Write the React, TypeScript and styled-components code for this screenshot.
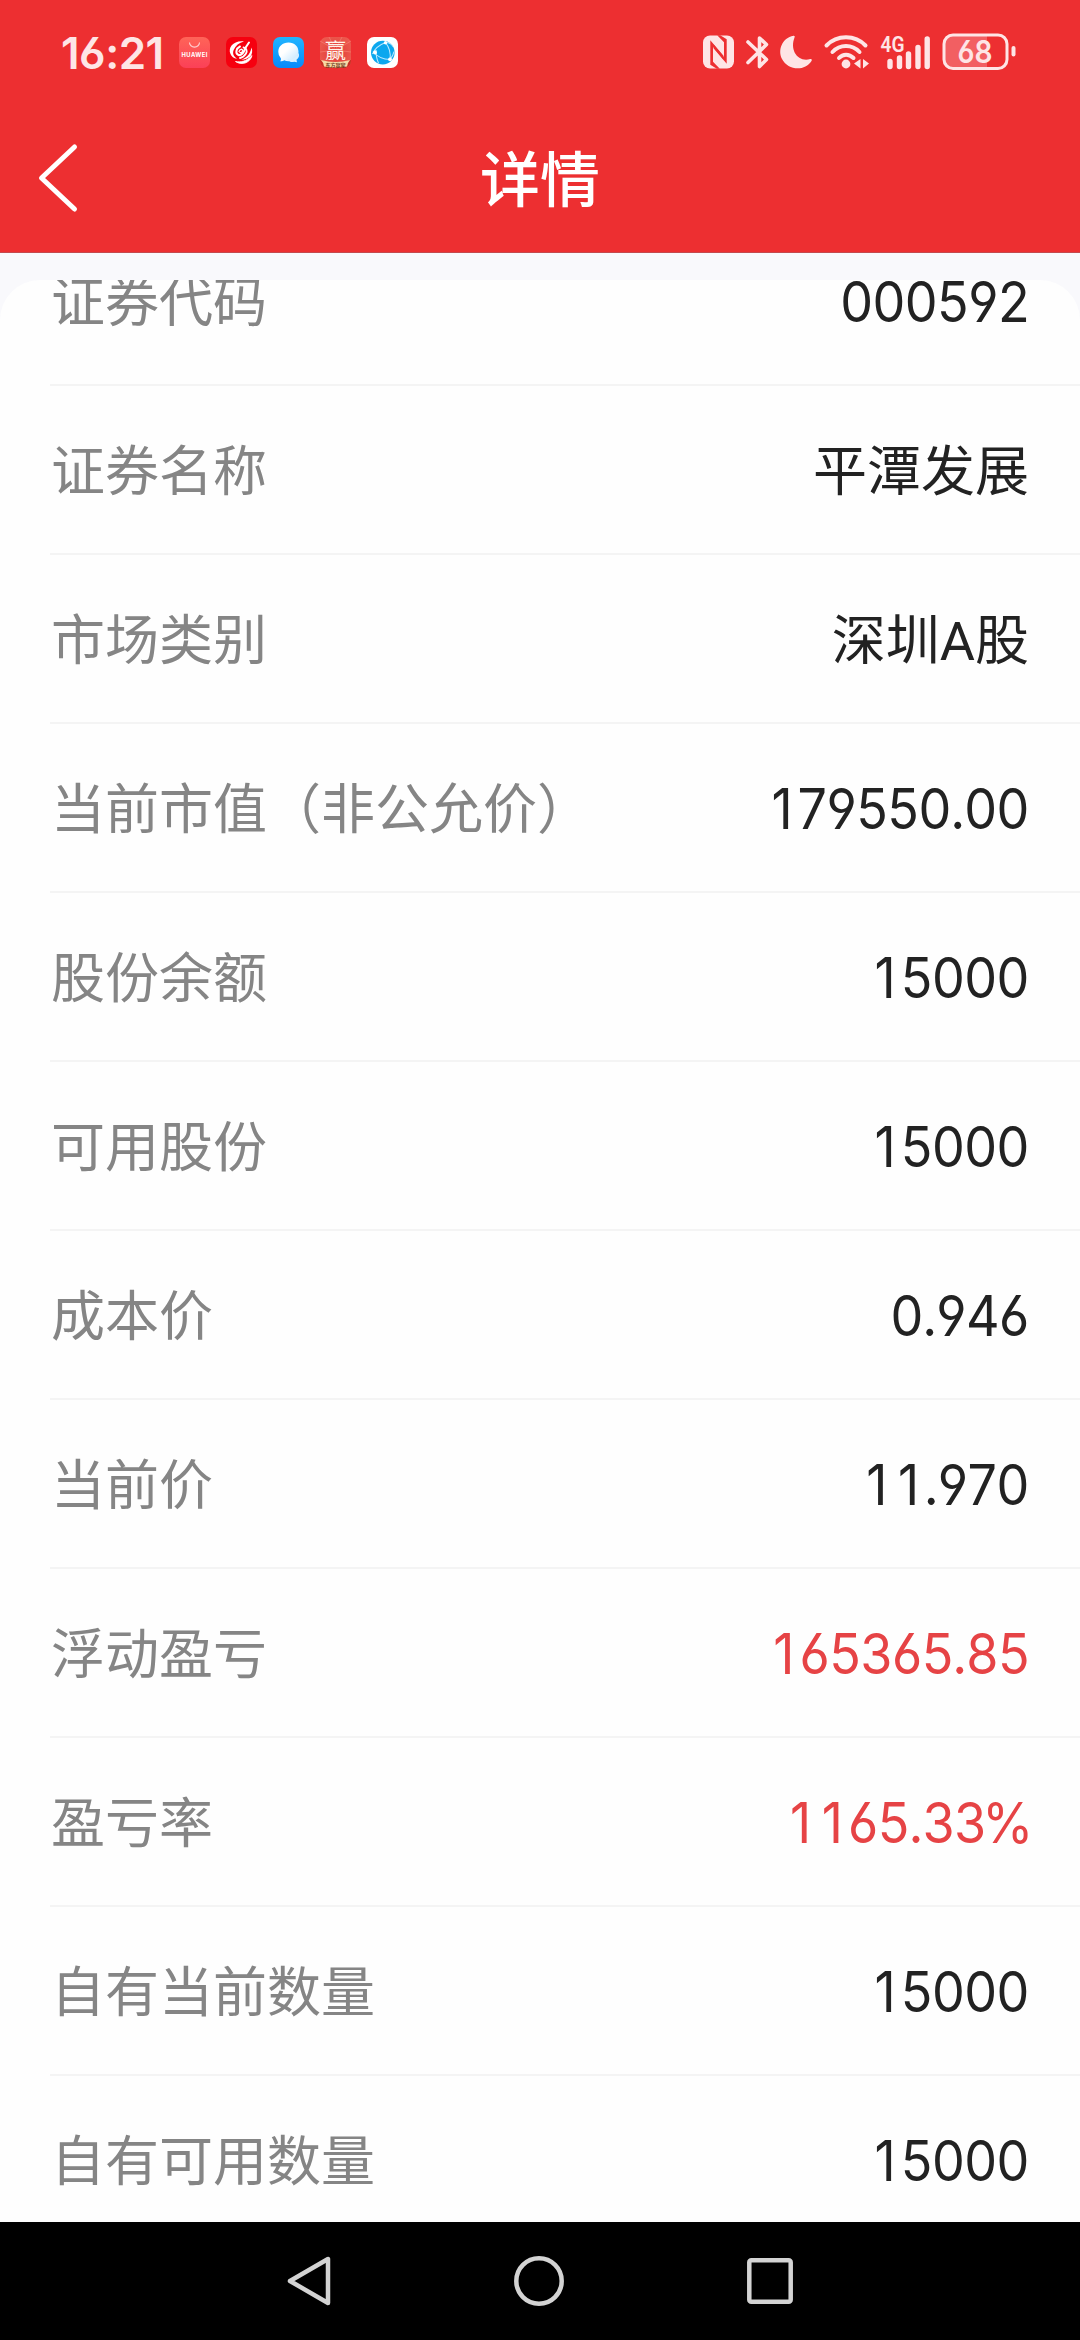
import React from "react";
import styled, { createGlobalStyle } from "styled-components";

const GlobalStyle = createGlobalStyle`
  * { box-sizing: border-box; }
  html, body { margin: 0; padding: 0; background: #000; }
  body { font-family: "Roboto", "Noto Sans CJK SC", sans-serif; }
`;

const Screen = styled.div`
  width: 1080px;
  height: 2340px;
  display: flex;
  flex-direction: column;
  overflow: hidden;
  background: #f9f9fc;
`;

const Header = styled.header`
  flex: none;
  height: 253px;
  background: #ed2f31;
  border-bottom: 1px solid #c34a4e;
`;

const StatusBar = styled.div`
  height: 104px;
  padding: 0 65px 0 61px;
  display: flex;
  align-items: center;
  justify-content: space-between;
  color: #fee5e6;
`;

const StatusSide = styled.div<{ $gap: number }>`
  display: flex;
  align-items: center;
  gap: ${(p) => p.$gap}px;
`;

const Clock = styled.span`
  width: 102px;
  padding-top: 2px;
  font-family: "Inter", sans-serif;
  font-size: 44px;
  line-height: 50px;
  font-weight: 570;
  font-feature-settings: "cv03", "cv04";
  letter-spacing: -0.5px;
  white-space: nowrap;
`;

const Icon = styled.svg`
  display: block;
  flex: none;
  overflow: visible;
`;

const TitleBar = styled.div`
  height: 148px;
  padding: 0 38px;
  display: grid;
  grid-template-columns: 1fr auto 1fr;
  align-items: center;
`;

const BackButton = styled.button`
  justify-self: start;
  padding: 0;
  border: 0;
  background: none;
`;

const Title = styled.h1`
  margin: 0;
  padding-bottom: 4px;
  color: #fff;
  font-family: "Noto Sans CJK SC", sans-serif;
  font-size: 60px;
  line-height: 80px;
  font-weight: 500;
`;

const Content = styled.main`
  flex: 1;
  min-height: 0;
  padding-top: 27px;
  display: flex;
`;

const Card = styled.section`
  flex: 1;
  overflow: hidden;
  background: #fefefe;
  border-radius: 40px 40px 0 0;
`;

const Rows = styled.dl`
  margin: -63px 0 0;
`;

const Row = styled.div`
  height: 169px;
  margin-left: 50px;
  padding: 0 51px 0 1px;
  display: flex;
  align-items: center;
  justify-content: space-between;
  border-bottom: 2px solid #f4f4f4;
`;

const Label = styled.dt`
  padding-bottom: 3px;
  color: #858585;
  font-family: "Noto Sans CJK SC", sans-serif;
  font-size: 54px;
  line-height: 80px;
  white-space: nowrap;
`;

const Value = styled.dd<{ $gain?: boolean }>`
  margin: 0;
  padding-top: 6px;
  color: ${(p) => (p.$gain ? "#e64345" : "#222")};
  font-family: "Roboto", "Noto Sans CJK SC", sans-serif;
  font-size: 54px;
  line-height: 80px;
  white-space: nowrap;
`;

const NumericValue = styled(Value)`
  padding: 2px 0 0;
  font-family: "Inter", sans-serif;
  font-size: 56px;
  font-weight: 420;
  font-kerning: none;
  font-feature-settings: "cv03", "cv04";
  letter-spacing: -0.6px;
  transform: scaleX(0.93);
  transform-origin: right center;
`;

const Spaced = styled.span<{ $before: number; $after: number }>`
  margin: 0 ${(p) => p.$after}px 0 ${(p) => p.$before}px;
`;

const NavBar = styled.nav`
  flex: none;
  height: 118px;
  padding: 0 287px;
  display: flex;
  align-items: center;
  justify-content: space-between;
  background: #000;
`;

type Item = { label: string; value: string; gain?: boolean };

const items: Item[] = [
  { label: "证券代码", value: "000592" },
  { label: "证券名称", value: "平潭发展" },
  { label: "市场类别", value: "深圳A股" },
  { label: "当前市值（非公允价）", value: "179550.00" },
  { label: "股份余额", value: "15000" },
  { label: "可用股份", value: "15000" },
  { label: "成本价", value: "0.946" },
  { label: "当前价", value: "11.970" },
  { label: "浮动盈亏", value: "165365.85", gain: true },
  { label: "盈亏率", value: "1165.33%", gain: true },
  { label: "自有当前数量", value: "15000" },
  { label: "自有可用数量", value: "15000" },
];

const spacing: Record<string, [number, number]> = {
  "1": [6, 6],
  ".": [-0.5, -0.5],
  "%": [-3.5, -4],
};

const renderPart = (part: string, i: number) => {
  const sides = spacing[part];
  return sides ? (
    <Spaced key={i} $before={sides[0]} $after={sides[1]}>{part}</Spaced>
  ) : (
    part
  );
};

const ItemValue = ({ value, gain }: { value: string; gain?: boolean }) =>
  /^[\d.%]+$/.test(value) ? (
    <NumericValue $gain={gain}>{value.split(/([1.%])/).map(renderPart)}</NumericValue>
  ) : (
    <Value $gain={gain}>{value}</Value>
  );

const AppIcons = () => (
  <StatusSide $gap={16}>
    <Icon width="31" height="31" viewBox="0 0 31 31">
      <defs>
        <linearGradient id="store" x1="0" y1="0" x2="0" y2="1">
          <stop offset="0" stopColor="#ff6458" />
          <stop offset="1" stopColor="#fb4057" />
        </linearGradient>
      </defs>
      <rect width="31" height="31" rx="7" fill="url(#store)" />
      <path d="M10.500 5.500a5 4.600 0 0 0 10 0" fill="none" stroke="#ffd0d0" strokeWidth="1.100" />
      <text x="15.500" y="20" textAnchor="middle" textLength="26" fontFamily="Inter, sans-serif" fontSize="5.800" fontWeight="700" fill="#fff">HUAWEI</text>
    </Icon>
    <Icon width="31" height="31" viewBox="0 0 31 31">
      <rect width="31" height="31" rx="7" fill="#f6000f" />
      <g fill="#fff">
        <path d="M18 4.500C8 3 1.500 10.500 4.500 17c1 2.600 3.300 4.300 6.500 4.800-3.500-2.500-4.800-5.500-3.200-9C9.500 8.500 13 6 18 4.500Z" />
        <path d="M25.500 10.500c2.500 7-2 12-10.500 12.300 4.500-1.500 9-4.500 10.500-12.300Z" />
        <path d="M9.500 24.500c5 1 11 0 16.500-6-1.500 7-10 10.500-16.500 6Z" stroke="#fff" strokeWidth="0.800" />
      </g>
      <g fill="none" stroke="#fff" strokeLinecap="round">
        <path d="M14 9.500c-4 2-5 7-1.500 8.500 4 1 5.500-3.500 7.500-8L23 5.500" strokeWidth="2" />
        <path d="M17.500 10.500c3 .5 4 3.500 2.500 6s-3.500 4-6 4.500" strokeWidth="1.800" />
        <path d="M13 14.500c1-2.500 3.500-3 3.500-1s-1.500 2.500-2.500 2" strokeWidth="1.300" />
      </g>
    </Icon>
    <Icon width="31" height="31" viewBox="0 0 31 31">
      <defs>
        <linearGradient id="chat" x1="0" y1="0" x2="0" y2="1">
          <stop offset="0" stopColor="#21b5ff" />
          <stop offset="1" stopColor="#0689fb" />
        </linearGradient>
        <linearGradient id="bubble" x1="0" y1="0" x2="1" y2="1">
          <stop offset="0.400" stopColor="#fff" />
          <stop offset="1" stopColor="#bde4ff" />
        </linearGradient>
      </defs>
      <rect width="31" height="31" rx="7" fill="url(#chat)" />
      <path d="M15.500 5.500c6 0 10 4 10 9.300s-4 9.400-10 9.400c-1.600 0-3-.3-4.300-.9-1 .8-2.600 1.200-4 1 .8-1 .9-2 .6-3A9 9 0 0 1 5.300 14.800c0-5.300 4.200-9.300 10.200-9.300Z" fill="url(#bubble)" />
      <path d="M14.500 22c1 2.500 4 3.700 6.600 2.800l2.900.5-.5-2.500a6 6 0 0 0 2-7c-1 4-5 7-11 6.200Z" fill="#d7efff" />
    </Icon>
    <Icon width="31" height="31" viewBox="0 0 31 31">
      <defs>
        <radialGradient id="win" cx="0.500" cy="0.500" r="0.700">
          <stop offset="0" stopColor="#df3a32" />
          <stop offset="1" stopColor="#ef6055" />
        </radialGradient>
      </defs>
      <rect width="31" height="31" rx="7" fill="url(#win)" />
      <path d="M15.500 13 0 4M15.500 13 9 0M15.500 13 22 0M15.500 13 31 4M15.500 13 0 15M15.500 13 31 15" stroke="#f4796c" strokeWidth="0.800" />
      <text x="15.500" y="21" textAnchor="middle" fontFamily="Noto Sans CJK SC, sans-serif" fontSize="21" fill="#fff4e9">赢</text>
      <path d="M0 23q15.500 4 31 0v1a7 7 0 0 1-7 7H7a7 7 0 0 1-7-7Z" fill="#c83024" />
      <path d="M1 23q14.500 4 29 0l-2 3-1 3.500q-11.500 1.800-23 0L3.200 26Z" fill="#f7d9a6" />
      <text x="15.500" y="29.700" textAnchor="middle" textLength="20" fontFamily="Noto Sans CJK SC, sans-serif" fontSize="5" fontWeight="700" fill="#70401e">东方赢家</text>
    </Icon>
    <Icon width="31" height="31" viewBox="0 0 31 31">
      <rect width="31" height="31" rx="7" fill="#fff" />
      <circle cx="15.800" cy="15.600" r="11.800" fill="#0ca7ee" />
      <g fill="none" stroke="#bce9ff" strokeWidth="1.100">
        <path d="M18.500 5.500C12 8 7.500 12 5.500 17M18.500 5.500c4 5 5.500 10 4.500 17M6 14.500c4.500 5.500 10 8 17 8M18.500 5.500c3.500-.2 6 1.500 7.500 4M23 22.500c2-2.500 3.500-5 4-8M9 13c0 5 .5 9 2.500 13" />
      </g>
      <g fill="#fff">
        <circle cx="18.500" cy="5.800" r="1.700" />
        <circle cx="8" cy="15.500" r="1.900" />
        <circle cx="23" cy="22.300" r="1.900" />
      </g>
    </Icon>
  </StatusSide>
);

const SystemIcons = () => (
  <Icon width="312" height="38" viewBox="0 0 312 38" fill="none" stroke="currentColor">
    <rect x="0" y="2.500" width="31" height="33" rx="7" stroke="none" fill="currentColor" />
    <g transform="translate(0 2.300)" stroke="none" fill="#ed2f31">
      <path d="M7.300 5v24.500l6.500 4h3L10 26.500V11.500l10.500 13V20.500Z" />
      <path d="M23.700 28.500V4L17.200 0h-3L21 7v15L10.500 9v4Z" />
    </g>
    <path d="m45 9 18.500 17.500-7 7V5l7 6.500L45 29.500" strokeWidth="3.600" strokeLinejoin="round" strokeLinecap="round" />
    <path d="M90.500 2.700C79 5 74.500 17 79 26c5.500 11 22.500 13 29.500 2 .8-1.500 0-2.300-1.300-1.900C95 29.500 86.500 17.500 91.500 4.500c.5-1.200.2-2-1-1.800Z" stroke="none" fill="currentColor" />
    <g strokeWidth="4" strokeLinecap="round">
      <path d="M123.500 12.500c10.500-11 28.500-11 39 0" />
      <path d="M129.500 19c7.500-8 19.500-8 27 0" />
      <path d="M136 25c4-4.500 10-4.500 14.500 0" />
    </g>
    <circle cx="143" cy="31" r="4.400" stroke="none" fill="currentColor" />
    <path d="M157.500 26v9.500l-6.500-5ZM160 26v9.500l6-5Z" stroke="none" fill="currentColor" />
    <text x="177.500" y="18.500" textLength="24" lengthAdjust="spacingAndGlyphs" fontFamily="Roboto, sans-serif" fontSize="22" fontWeight="600" stroke="none" fill="currentColor">4G</text>
    <path d="M187 28.500v5M196.500 25v8.500M205.500 21v12.500M215 14.500v19M224.200 6v27.500" strokeWidth="5.400" strokeLinecap="round" />
    <path d="M247 3h37v31h-37a6 6 0 0 1-6-6V9a6 6 0 0 1 6-6Z" fill="#f25f62" stroke="none" />
    <rect x="241" y="2" width="63" height="33.500" rx="9" strokeWidth="3" />
    <text x="272" y="30" textAnchor="middle" textLength="35" lengthAdjust="spacingAndGlyphs" fontFamily="Inter, sans-serif" fontSize="31.500" fontWeight="600" stroke="none" fill="currentColor" style={{ fontFeatureSettings: '"cv03"' }}>68</text>
    <path d="M310.500 15v6.500" strokeWidth="4" strokeLinecap="round" />
  </Icon>
);

export default function App() {
  return (
    <>
      <GlobalStyle />
      <Screen>
        <Header>
          <StatusBar>
            <StatusSide $gap={16}>
              <Clock>16:21</Clock>
              <AppIcons />
            </StatusSide>
            <SystemIcons />
          </StatusBar>
          <TitleBar>
            <BackButton aria-label="返回">
              <Icon width="40" height="68" viewBox="0 0 40 68">
                <path d="M36.500 3 3.500 34l33 31" fill="none" stroke="#fff" strokeWidth="5" strokeLinecap="round" strokeLinejoin="round" />
              </Icon>
            </BackButton>
            <Title>详情</Title>
          </TitleBar>
        </Header>
        <Content>
          <Card>
            <Rows>
              {items.map((item) => (
                <Row key={item.label}>
                  <Label>{item.label}</Label>
                  <ItemValue value={item.value} gain={item.gain} />
                </Row>
              ))}
            </Rows>
          </Card>
        </Content>
        <NavBar>
          <Icon width="44" height="50" viewBox="0 0 44 50">
            <path d="M41 3v44L3 25Z" fill="none" stroke="#d3d3d3" strokeWidth="4.500" strokeLinejoin="round" />
          </Icon>
          <Icon width="50" height="50" viewBox="0 0 50 50">
            <circle cx="25" cy="25" r="22.700" fill="none" stroke="#d3d3d3" strokeWidth="4.500" />
          </Icon>
          <Icon width="46" height="46" viewBox="0 0 46 46">
            <rect x="2.300" y="2.300" width="41.400" height="41.400" rx="2" fill="none" stroke="#d3d3d3" strokeWidth="4.500" />
          </Icon>
        </NavBar>
      </Screen>
    </>
  );
}
